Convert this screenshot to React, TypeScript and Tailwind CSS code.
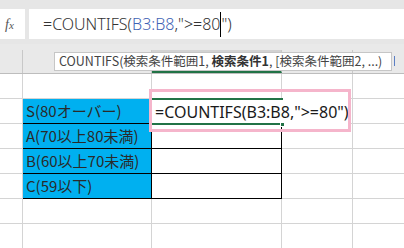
import React from "react";

const font = { fontFamily: '"Noto Sans", "Noto Sans CJK JP", sans-serif' };

function Row({ label }: { label?: string }) {
  return (
    <div className="flex h-[25px]">
      <div className="w-[23px] shrink-0 border-r border-b border-[#d4d4d4]" />
      {label ? (
        <div
          className="w-[129px] shrink-0 bg-[#00b0f0] border-b border-r border-black flex items-center pl-[3px] text-[15px] text-[#2a2a2a] whitespace-nowrap"
          style={{ fontFamily: '"Noto Sans CJK JP", sans-serif' }}
        >
          {label}
        </div>
      ) : (
        <div className="w-[129px] shrink-0 border-r border-b border-[#d4d4d4]" />
      )}
      {label ? (
        <div className="w-[130px] shrink-0 bg-white border-b border-r border-black" />
      ) : (
        <div className="w-[130px] shrink-0 border-r border-b border-[#d4d4d4]" />
      )}
      <div className="w-[71px] shrink-0 border-r border-b border-[#d4d4d4]" />
      <div className="flex-1 border-b border-[#d4d4d4]" />
    </div>
  );
}

export default function App() {
  return (
    <div className="relative w-[404px] h-[248px] overflow-hidden bg-white" style={font}>
      {/* top formula bar */}
      <div className="h-[44px] bg-[#e6e6e6] flex items-start pt-[9px]">
        <div className="w-[25px] h-[30px] bg-white flex items-center pl-[5px]">
          <span className="italic text-[14px] text-[#555]" style={{ fontFamily: '"Liberation Serif", serif' }}>
            f<span className="text-[11px]">x</span>
          </span>
        </div>
        <div className="ml-[4px] flex-1 h-[30px] bg-white flex items-center pl-[14px] text-[16px] font-light text-[#333] whitespace-nowrap">
          <span>=COUNTIFS(</span>
          <span className="text-[#3f63b5]">B3:B8</span>
          <span>,"&gt;=80</span>
          <span className="inline-block w-[1px] h-[25px] bg-black" />
          <span>")</span>
        </div>
      </div>
      {/* column header row */}
      <div className="flex h-[30px] bg-[#e9e9e9] border-b border-[#bdbdbd]">
        <div className="w-[23px] shrink-0 border-r border-[#c8c8c8] mt-[6px]" />
        <div className="w-[129px] shrink-0 border-r border-[#c8c8c8] mt-[6px]" />
        <div className="w-[130px] shrink-0 bg-[#d2d2d2] border-r border-[#c8c8c8] border-b-2 border-b-[#217346] mt-[6px]" />
        <div className="w-[71px] shrink-0 border-r border-[#c8c8c8] mt-[6px]" />
        <div className="flex-1" />
      </div>
      {/* grid */}
      <Row />
      <Row label="S(80オーバー)" />
      <Row label="A(70以上80未満)" />
      <Row label="B(60以上70未満)" />
      <Row label="C(59以下)" />
      <Row />
      <Row />

      {/* editing cell overlay */}
      <div className="absolute left-[152px] top-[98px] w-[198px] h-[27px] bg-white flex items-center pl-[3px] text-[16px] text-[#1a1a1a] whitespace-nowrap">
        =COUNTIFS(B3:B8,"&gt;=80")
      </div>
      <div className="absolute left-[152px] top-[98px] w-[131px] h-[2px] bg-[#217346]" />
      <div className="absolute left-[152px] top-[123px] w-[128px] h-[2px] bg-[#217346]" />
      <div className="absolute left-[280px] top-[122px] w-[5px] h-[5px] bg-[#217346] border border-white" />
      {/* pink highlight */}
      <div className="absolute left-[149px] top-[89px] w-[202px] h-[43px] border-[3px] border-[#f5b5cb]" />

      {/* tooltip */}
      <div
        className="absolute left-[54px] top-[52px] w-[338px] h-[19px] bg-white border border-[#c6c6c6] flex items-center pl-[4px] text-[12.5px] text-[#444] whitespace-nowrap"
        style={{ fontFamily: '"Noto Sans CJK JP", sans-serif' }}
      >
        COUNTIFS(検索条件範囲1, <b className="font-bold text-[#333]">&nbsp;検索条件1</b>, [検索条件範囲2, ...)
      </div>
      <div className="absolute left-[394px] top-[56px] w-[1px] h-[10px] bg-[#5b7fc4]" />
    </div>
  );
}
